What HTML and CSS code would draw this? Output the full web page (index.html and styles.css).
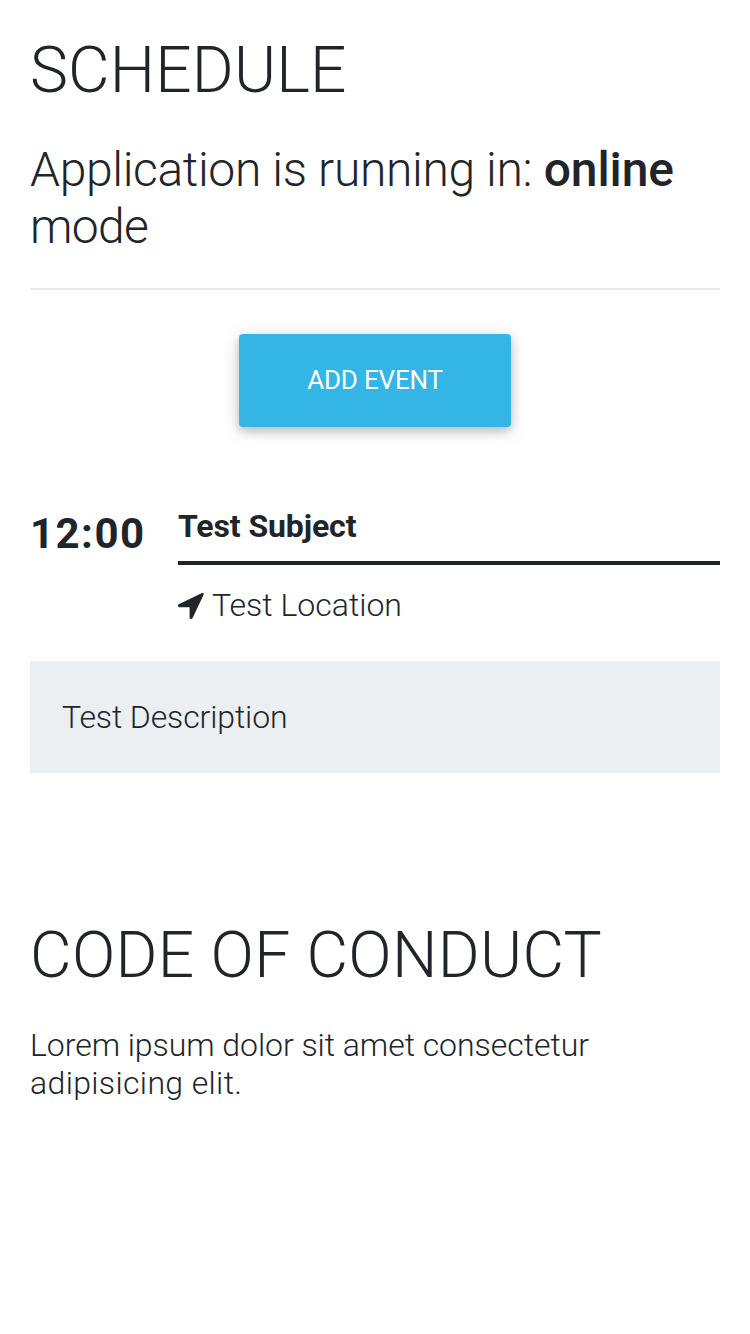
FILE: index.html
```
<!DOCTYPE html>
<html lang="en">
<head>
<meta charset="utf-8">
<title>Schedule</title>
<link rel="stylesheet" href="styles.css">
</head>
<body>
<main class="page">
  <section class="schedule">
    <h1 class="title">SCHEDULE</h1>
    <p class="status">Application is running in: <strong class="status-mode">online</strong> <span class="status-end">mode</span></p>
    <hr class="divider">
    <button class="add-button" type="button">ADD EVENT</button>
    <article class="event">
      <div class="event-head">
        <time class="event-time">12:00</time>
        <div class="event-info">
          <h2 class="event-subject">Test Subject</h2>
          <p class="event-location">
            <svg class="location-icon" viewBox="0 0 26 26" aria-hidden="true"><path d="M24 .1 .7 11.3C-.4 12-.2 14.2 1.1 14.2H11.6V24.7C11.6 26.1 13.8 26.3 14.5 25.2L25.6 1.8C26 .6 25.2-.3 24 .1Z"/></svg>
            <span>Test Location</span>
          </p>
        </div>
      </div>
      <p class="event-description">Test Description</p>
    </article>
  </section>
  <section class="conduct">
    <h1 class="title title-wide">CODE OF CONDUCT</h1>
    <p class="conduct-text">Lorem ipsum dolor sit amet consectetur <span class="conduct-end">adipisicing elit.</span></p>
  </section>
</main>
</body>
</html>
```
FILE: styles.css
```
* { box-sizing: border-box; }
body {
  margin: 0;
  background: #fff;
  color: #212529;
  font-family: Roboto, sans-serif;
  font-size: 32px;
  font-weight: 300;
  line-height: 38px;
}
h1, h2, p { margin: 0; }
.page { padding: 32px 30px 0; }
.title { font-size: 64px; font-weight: 300; line-height: 77px; letter-spacing: .15px; }
.title-wide { letter-spacing: .33px; }
.status { margin-top: 32px; font-size: 48px; line-height: 57px; letter-spacing: -.35px; }
.status-mode { font-weight: 460; letter-spacing: -.1px; }
.status-end { letter-spacing: -.7px; }
.divider { height: 2px; margin: 33px 0 44px; border: 0; background: #e8eaed; }
.add-button {
  display: block;
  width: 272px;
  height: 93px;
  margin: 0 auto;
  padding: 0;
  border: 0;
  border-radius: 4px;
  background: #33b5e5;
  box-shadow: 0 4px 10px rgba(0,0,0,.2), 0 4px 20px rgba(0,0,0,.12);
  color: #fff;
  font: 400 26px/39px Roboto, sans-serif;
  letter-spacing: -.2px;
}
.event { margin-top: 80px; }
.event-head { display: flex; }
.event-time { width: 148px; padding-top: 8px; font-size: 42px; font-weight: 700; line-height: 38px; letter-spacing: 1.45px; }
.event-info { flex: 1; }
.event-subject { padding-bottom: 16px; border-bottom: 4px solid #212529; font-size: 32px; font-weight: 700; line-height: 38px; letter-spacing: -.1px; }
.event-location { display: flex; align-items: center; gap: 8px; margin-top: 21px; }
.location-icon { width: 26px; height: 26px; margin-top: 1px; fill: currentColor; }
.event-description { margin-top: 37px; padding: 37px 32px; background: #ebeff2; letter-spacing: -.12px; }
.conduct { margin-top: 144px; }
.conduct-text { margin-top: 32px; letter-spacing: -.05px; }
.conduct-end { letter-spacing: .36px; }
```
